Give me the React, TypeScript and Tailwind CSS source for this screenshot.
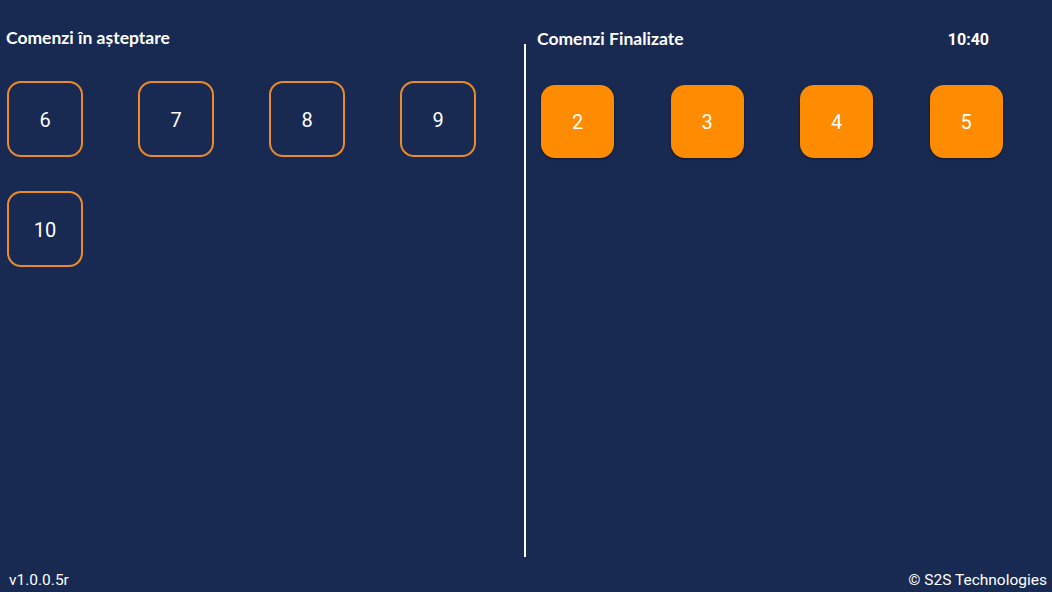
import React from "react";

const pending = ["6", "7", "8", "9", "10"];
const done = ["2", "3", "4", "5"];

export default function App() {
  return (
    <div className="w-[1052px] h-[592px] bg-[#182a52] flex flex-col overflow-hidden text-white" style={{ fontFamily: "Roboto, 'Liberation Sans', sans-serif" }}>
      <div className="flex h-[565px]">
        <div className="w-[524px] pt-[27px] pl-[6px]">
          <div className="h-[21px] leading-[21px] text-[17.5px] font-bold" style={{ fontFamily: "Lato, 'Open Sans', sans-serif" }}>
            Comenzi în așteptare
          </div>
          <div className="mt-[33px] ml-[1px] grid grid-cols-[repeat(4,76px)] gap-x-[55px] gap-y-[34px]">
            {pending.map((n) => (
              <div key={n} className="w-[76px] h-[76px] rounded-[14px] border-2 border-[#ec8a28] flex items-center justify-center text-[20px] pt-[1px]">
                {n}
              </div>
            ))}
          </div>
        </div>
        <div className="w-[2px] bg-white mt-[44px] h-[513px]" />
        <div className="flex-1 pt-[28px] pl-[11px]">
          <div className="flex items-center justify-between pr-[63px] h-[21px]">
            <div className="leading-[21px] text-[17.5px] font-bold" style={{ fontFamily: "Lato, 'Open Sans', sans-serif" }}>
              Comenzi Finalizate
            </div>
            <div className="leading-[21px] text-[16px] font-bold mt-[2px]">10:40</div>
          </div>
          <div className="mt-[36px] ml-[4px] grid grid-cols-[repeat(4,73px)] gap-x-[56.5px]">
            {done.map((n) => (
              <div key={n} className="w-[73px] h-[73px] rounded-[14px] bg-[#ff8b00] shadow-[0_1px_3px_rgba(0,0,0,0.45)] flex items-center justify-center text-[20px]">
                {n}
              </div>
            ))}
          </div>
        </div>
      </div>
      <div className="flex justify-between items-center pl-[9px] pr-[5px] h-[27px] pt-[5px] text-[15.5px]">
        <span>v1.0.0.5r</span>
        <span>© S2S Technologies</span>
      </div>
    </div>
  );
}
